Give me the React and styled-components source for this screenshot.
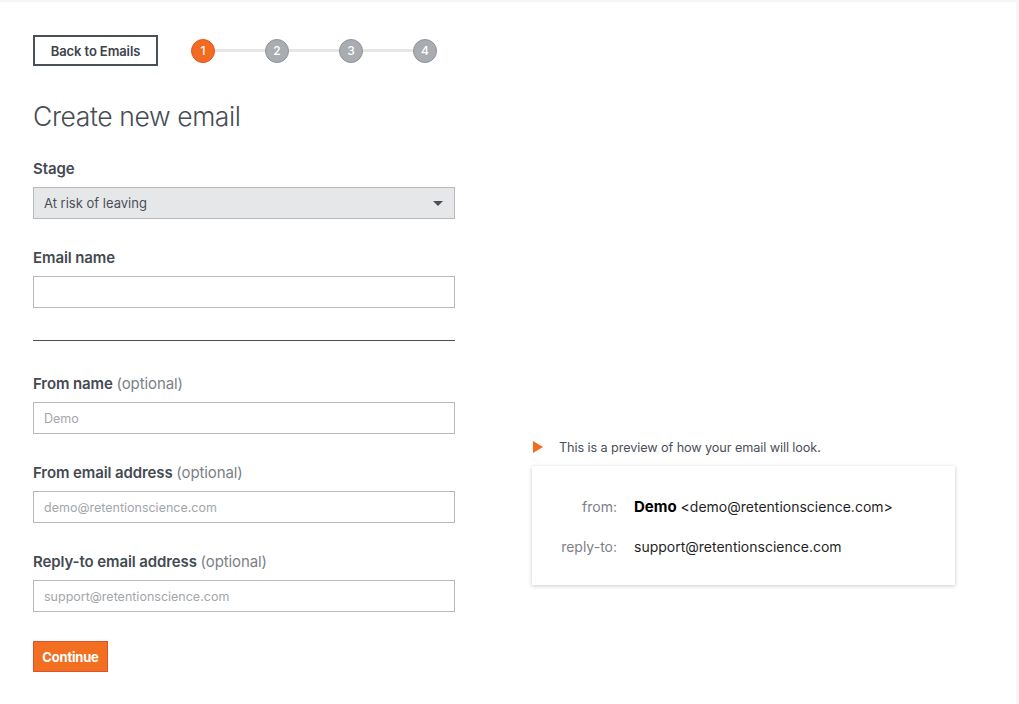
import React from "react";
import styled, { createGlobalStyle } from "styled-components";

const Global = createGlobalStyle`
  html, body { margin: 0; padding: 0; background: #f6f6f6; }
  body { font-family: Inter, "Open Sans", "Liberation Sans", sans-serif; color: #4a4f57; }
  * { box-sizing: border-box; }
`;

const Page = styled.div`
  margin: 2px 3px 0 0;
  min-height: 702px;
  background: #fff;
  padding: 33px 0 0 33px;
  display: grid;
  grid-template-columns: 422px 423px;
  column-gap: 77px;
  align-items: start;
`;

const FormCol = styled.div`
  display: flex;
  flex-direction: column;
`;

const Header = styled.div`
  display: flex;
  align-items: center;
  gap: 33px;
`;

const BackButton = styled.button`
  width: 125px;
  height: 31px;
  border: 2px solid #4a5058;
  background: #fff;
  color: #3d434b;
  font-family: inherit;
  font-weight: 600;
  font-size: 13px;
  letter-spacing: -0.1px;
  padding: 0;
`;

const Stepper = styled.div`
  display: flex;
  align-items: center;
`;

const Step = styled.div`
  width: 24px;
  height: 24px;
  border-radius: 50%;
  background: ${(p) => (p.$active ? "#f26b21" : "#a9acb1")};
  border: 1px solid ${(p) => (p.$active ? "#df5425" : "#8f9398")};
  color: #fff;
  font-size: 12px;
  font-weight: 500;
  display: flex;
  align-items: center;
  justify-content: center;
`;

const Connector = styled.div`
  width: 50px;
  height: 3px;
  background: #e6e6e6;
`;

const Title = styled.h1`
  margin: 33px 0 0;
  font-size: 26.5px;
  font-weight: 300;
  color: #474c54;
  letter-spacing: -0.4px;
  line-height: 34px;
`;

const Field = styled.div`
  display: flex;
  flex-direction: column;
  margin-top: ${(p) => p.$mt || 0}px;
`;

const Label = styled.label`
  font-size: 15px;
  font-weight: 600;
  color: #454a52;
  line-height: 20px;
  margin-bottom: 8px;
  letter-spacing: -0.1px;
`;

const Optional = styled.span`
  font-weight: 400;
  color: #7b8087;
`;

const SelectBox = styled.div`
  height: 32px;
  border: 1px solid #b6b8bb;
  background: #e6e7e9;
  display: flex;
  align-items: center;
  justify-content: space-between;
  padding: 0 11px 0 10px;
  font-size: 13px;
  color: #4a4f57;
`;

const Caret = styled.span`
  width: 0;
  height: 0;
  border-left: 5px solid transparent;
  border-right: 5px solid transparent;
  border-top: 5px solid #4a4f57;
`;

const Input = styled.input`
  height: 32px;
  border: 1px solid #b6b8bb;
  background: #fff;
  padding: 0 10px;
  font-family: inherit;
  font-size: 12.5px;
  color: #4a4f57;
  outline: none;
  &::placeholder { color: #a3a6ab; }
`;

const Divider = styled.hr`
  margin: 32px 0 0;
  border: 0;
  border-top: 1px solid #4a4f57;
  height: 0;
`;

const ContinueButton = styled.button`
  align-self: flex-start;
  margin-top: 29px;
  width: 75px;
  height: 31px;
  background: #f26f21;
  border: 1px solid #e0502a;
  color: #fff;
  font-family: inherit;
  font-weight: 700;
  font-size: 13px;
  padding: 0;
  letter-spacing: -0.2px;
`;

const PreviewCol = styled.div`
  padding-top: 403px;
  display: flex;
  flex-direction: column;
`;

const PreviewNote = styled.div`
  display: flex;
  align-items: center;
  gap: 16px;
  font-size: 12.7px;
  letter-spacing: -0.1px;
  color: #4a4f57;
  padding-left: 1px;
  height: 18px;
`;

const Triangle = styled.span`
  width: 0;
  height: 0;
  border-top: 6px solid transparent;
  border-bottom: 6px solid transparent;
  border-left: 10px solid #f26b21;
`;

const Card = styled.div`
  margin-top: 10px;
  background: #fff;
  box-shadow: 0 1px 4px rgba(0, 0, 0, 0.22);
  padding: 30px 0 28px;
  display: grid;
  grid-template-columns: 85px auto;
  column-gap: 17px;
  row-gap: 19px;
  font-size: 14px;
  line-height: 21px;
`;

const Key = styled.div`
  text-align: right;
  color: #7d8188;
`;

const Value = styled.div`
  color: #1f1f1f;
`;

const Strong = styled.strong`
  font-weight: 700;
  color: #000;
  font-size: 15px;
`;

export default function App() {
  return (
    <>
      <Global />
      <Page>
        <FormCol>
          <Header>
            <BackButton>Back to Emails</BackButton>
            <Stepper>
              <Step $active>1</Step>
              <Connector />
              <Step>2</Step>
              <Connector />
              <Step>3</Step>
              <Connector />
              <Step>4</Step>
            </Stepper>
          </Header>
          <Title>Create new email</Title>
          <Field $mt={26}>
            <Label>Stage</Label>
            <SelectBox>
              <span>At risk of leaving</span>
              <Caret />
            </SelectBox>
          </Field>
          <Field $mt={29}>
            <Label>Email name</Label>
            <Input />
          </Field>
          <Divider />
          <Field $mt={33}>
            <Label>
              From name <Optional>(optional)</Optional>
            </Label>
            <Input placeholder="Demo" />
          </Field>
          <Field $mt={29}>
            <Label>
              From email address <Optional>(optional)</Optional>
            </Label>
            <Input placeholder="demo@retentionscience.com" />
          </Field>
          <Field $mt={29}>
            <Label>
              Reply-to email address <Optional>(optional)</Optional>
            </Label>
            <Input placeholder="support@retentionscience.com" />
          </Field>
          <ContinueButton>Continue</ContinueButton>
        </FormCol>
        <PreviewCol>
          <PreviewNote>
            <Triangle />
            <span>This is a preview of how your email will look.</span>
          </PreviewNote>
          <Card>
            <Key>from:</Key>
            <Value>
              <Strong>Demo</Strong> &lt;demo@retentionscience.com&gt;
            </Value>
            <Key>reply-to:</Key>
            <Value>support@retentionscience.com</Value>
          </Card>
        </PreviewCol>
      </Page>
    </>
  );
}
